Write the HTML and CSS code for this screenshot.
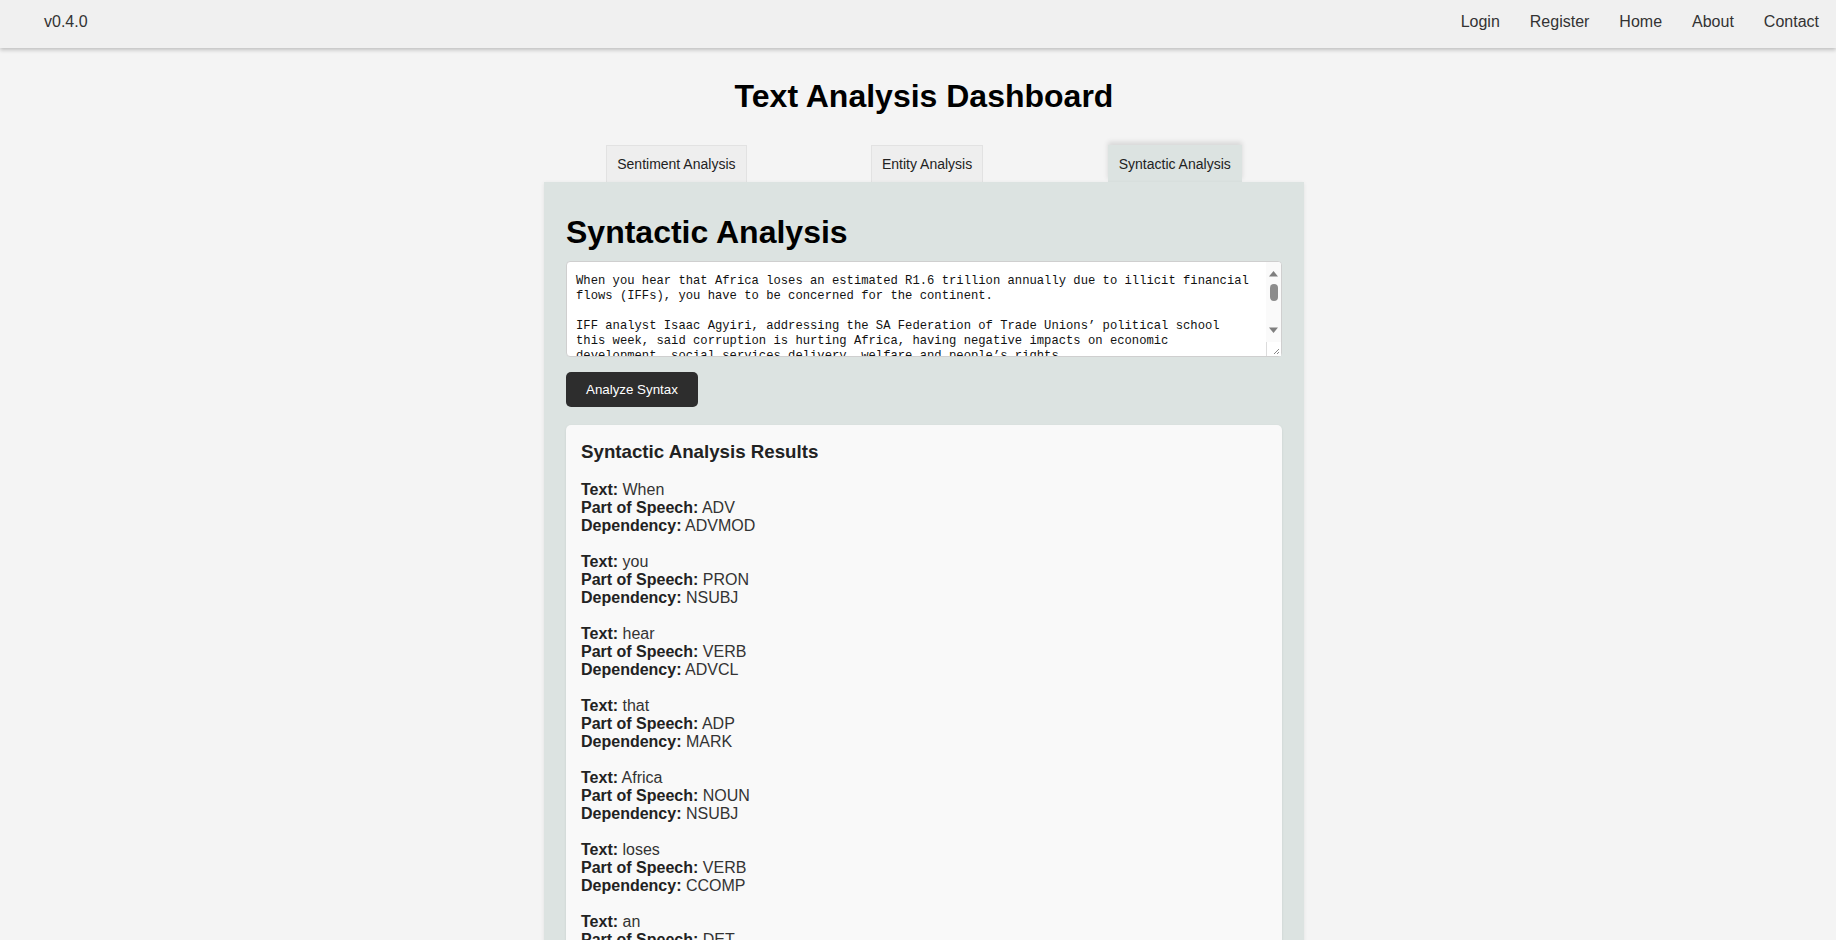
FILE: index.html
```html
<!DOCTYPE html>
<html lang="en">
<head>
<meta charset="utf-8">
<title>Text Analysis Dashboard</title>
<link rel="stylesheet" href="styles.css">
</head>
<body>
<header class="topbar">
  <span class="version">v0.4.0</span>
  <nav class="links">
    <a href="#">Login</a>
    <a href="#">Register</a>
    <a href="#">Home</a>
    <a href="#">About</a>
    <a href="#">Contact</a>
  </nav>
</header>
<main class="page">
  <div class="dashboard">
    <h1 class="title">Text Analysis Dashboard</h1>
    <div class="tabs">
      <button class="tab">Sentiment Analysis</button>
      <button class="tab">Entity Analysis</button>
      <button class="tab active">Syntactic Analysis</button>
    </div>
    <section class="panel">
      <h2 class="panel-title">Syntactic Analysis</h2>
      <div class="input-wrap">
        <textarea class="input">When you hear that Africa loses an estimated R1.6 trillion annually due to illicit financial flows (IFFs), you have to be concerned for the continent.

IFF analyst Isaac Agyiri, addressing the SA Federation of Trade Unions’ political school this week, said corruption is hurting Africa, having negative impacts on economic development, social services delivery, welfare and people’s rights.

Agyiri said the continent needed stronger institutions, transparent tax systems and closer cooperation between governments to stop the outflow.</textarea>
        <div class="fake-scroll" aria-hidden="true">
          <svg class="arrow" width="15" height="18" viewBox="0 0 15 18"><polygon points="3,14.5 12,14.5 7.5,9" fill="#7f7f7f"/></svg>
          <div class="track"><div class="thumb"></div></div>
          <svg class="arrow" width="15" height="18" viewBox="0 0 15 18"><polygon points="3,3.5 12,3.5 7.5,9" fill="#7f7f7f"/></svg>
        </div>
      </div>
      <button class="analyze">Analyze Syntax</button>
      <div class="results">
        <h3 class="results-title">Syntactic Analysis Results</h3>
        <div class="token"><div><b>Text:</b> When</div><div><b>Part of Speech:</b> ADV</div><div><b>Dependency:</b> ADVMOD</div></div>
        <div class="token"><div><b>Text:</b> you</div><div><b>Part of Speech:</b> PRON</div><div><b>Dependency:</b> NSUBJ</div></div>
        <div class="token"><div><b>Text:</b> hear</div><div><b>Part of Speech:</b> VERB</div><div><b>Dependency:</b> ADVCL</div></div>
        <div class="token"><div><b>Text:</b> that</div><div><b>Part of Speech:</b> ADP</div><div><b>Dependency:</b> MARK</div></div>
        <div class="token"><div><b>Text:</b> Africa</div><div><b>Part of Speech:</b> NOUN</div><div><b>Dependency:</b> NSUBJ</div></div>
        <div class="token"><div><b>Text:</b> loses</div><div><b>Part of Speech:</b> VERB</div><div><b>Dependency:</b> CCOMP</div></div>
        <div class="token"><div><b>Text:</b> an</div><div><b>Part of Speech:</b> DET</div><div><b>Dependency:</b> DET</div></div>
        <div class="token"><div><b>Text:</b> estimated</div><div><b>Part of Speech:</b> VERB</div><div><b>Dependency:</b> AMOD</div></div>
      </div>
    </section>
  </div>
</main>
</body>
</html>
```
FILE: styles.css
```css
html {
  scrollbar-width: none;
}
html::-webkit-scrollbar {
  display: none;
}
body {
  margin: 0;
  background: #f4f4f4;
  font-family: "Liberation Sans", Arial, sans-serif;
  color: #333;
}

.topbar {
  box-sizing: border-box;
  height: 48px;
  padding: 13px 17px 0 44px;
  display: flex;
  justify-content: space-between;
  align-items: flex-start;
  background: #f0f0f0;
  box-shadow: 0 2px 4px rgba(0, 0, 0, 0.22);
  font-size: 16px;
  line-height: 18px;
  position: relative;
  z-index: 2;
}
.version {
  color: #333;
}
.links {
  display: flex;
  gap: 30px;
}
.links a {
  color: #333;
  text-decoration: none;
}

.page {
  padding: 30px 0 0 12px;
}
.dashboard {
  width: 760px;
  margin: 0 auto;
}
.title {
  margin: 0 0 30px;
  text-align: center;
  font-size: 32px;
  font-weight: bold;
  color: #000;
}

.tabs {
  display: flex;
  justify-content: space-around;
  align-items: flex-end;
}
.tab {
  font-family: "Liberation Sans", Arial, sans-serif;
  font-size: 14px;
  color: #222;
  padding: 10px 10px;
  background: #eeeeee;
  border: 1px solid #e2e2e2;
  border-bottom: none;
  margin: 0;
  cursor: pointer;
}
.tab.active {
  background: #dce3e1;
  border-color: #dce3e1;
  box-shadow: 0 -3px 5px rgba(0, 0, 0, 0.12);
  position: relative;
  z-index: 1;
}

.panel {
  background: #dce3e1;
  padding: 22px;
  min-height: 800px;
  box-shadow: 0 1px 4px rgba(0, 0, 0, 0.08);
  position: relative;
  z-index: 1;
}
.panel-title {
  margin: 10px 0 10px;
  font-size: 32px;
  font-weight: bold;
  color: #000;
}

.input-wrap {
  position: relative;
}
.input {
  display: block;
  box-sizing: border-box;
  width: 100%;
  height: 96px;
  margin: 0;
  padding: 12px 28px 10px 9px;
  border: 1px solid #cfcfcf;
  border-radius: 4px;
  background: #fff;
  color: #111;
  font-family: "Liberation Mono", "DejaVu Sans Mono", monospace;
  font-size: 12.2px;
  line-height: 15px;
  resize: vertical;
  overflow: hidden;
}
.input::-webkit-resizer {
  background: #fff url("data:image/svg+xml;utf8,<svg xmlns='http://www.w3.org/2000/svg' width='15' height='15'><path d='M0.5 15V0.5H15' fill='none' stroke='%23dcdcdc'/><path d='M13 8L8 13M13 11L11 13' stroke='%23888' stroke-width='1'/></svg>") no-repeat;
}
.fake-scroll {
  position: absolute;
  top: 1px;
  right: 1px;
  width: 15px;
  height: 80px;
  background: #fafafa;
  display: flex;
  flex-direction: column;
  border-top-right-radius: 3px;
}
.arrow {
  display: block;
  flex: none;
}
.track {
  flex: 1;
  display: flex;
  justify-content: center;
}
.thumb {
  width: 8px;
  height: 17px;
  margin-top: 4px;
  border-radius: 4px;
  background: #8c8c8c;
}

.analyze {
  display: block;
  margin-top: 15px;
  padding: 10px 20px;
  border: none;
  border-radius: 5px;
  background: #2d2d2d;
  color: #fff;
  font-family: "Liberation Sans", Arial, sans-serif;
  font-size: 13.33px;
  cursor: pointer;
}

.results {
  margin-top: 18px;
  padding: 16px 15px 15px;
  background: #f9f9f9;
  border-radius: 5px;
  box-shadow: 0 1px 3px rgba(0, 0, 0, 0.08);
}
.results-title {
  margin: 0 0 18px;
  font-size: 18.72px;
  font-weight: bold;
  color: #222;
}
.token {
  font-size: 16px;
  line-height: 18px;
  margin-bottom: 18px;
  color: #333;
}
.token b {
  color: #222;
}
```
